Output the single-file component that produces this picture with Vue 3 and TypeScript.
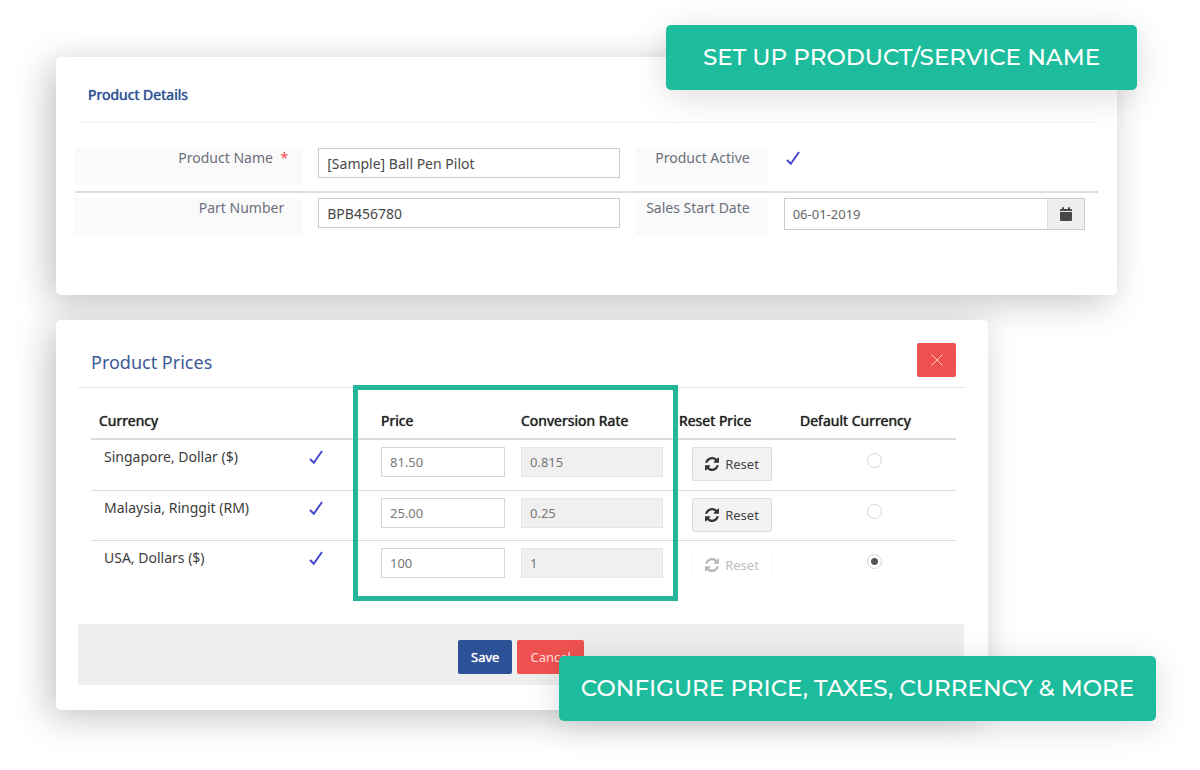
<script setup lang="ts">
import { ref } from 'vue'

interface PriceRow {
  id: string
  currency: string
  price: string
  rate: string
}

const productName = ref('[Sample] Ball Pen Pilot')
const partNumber = ref('BPB456780')
const salesStart = ref('06-01-2019')
const defaultCurrency = ref('usd')

const rows = ref<PriceRow[]>([
  { id: 'sgd', currency: 'Singapore, Dollar ($)', price: '81.50', rate: '0.815' },
  { id: 'myr', currency: 'Malaysia, Ringgit (RM)', price: '25.00', rate: '0.25' },
  { id: 'usd', currency: 'USA, Dollars ($)', price: '100', rate: '1' },
])
</script>

<template>
  <main class="page">
    <section class="card details">
      <h2 class="details-title">Product Details</h2>
      <div class="fields">
        <div class="field-row">
          <label class="field-label" for="product-name">Product Name <span class="required">*</span></label>
          <input id="product-name" v-model="productName" class="text-input" type="text" />
          <span class="field-label">Product Active</span>
          <span class="field-value">
            <svg class="check" viewBox="0 0 14 15" role="img" aria-label="Yes"><path d="M1 9 4.8 12.800 13 1" /></svg>
          </span>
        </div>
        <div class="field-row">
          <label class="field-label" for="part-number">Part Number</label>
          <input id="part-number" v-model="partNumber" class="text-input" type="text" />
          <label class="field-label" for="sales-start">Sales Start Date</label>
          <div class="date-group">
            <input id="sales-start" v-model="salesStart" class="date-input" type="text" />
            <button class="date-button" type="button" aria-label="Pick a date">
              <svg viewBox="0 0 12 14" width="12" height="14"><path d="M0 4V3Q0 2 1 2H2V1Q2 0 3 0T4 1V2H8V1Q8 0 9 0T10 1V2H11Q12 2 12 3V4ZM0 5H12V13Q12 14 11 14H1Q0 14 0 13Z" /></svg>
            </button>
          </div>
        </div>
      </div>
      <p class="callout callout-top">SET UP PRODUCT/SERVICE NAME</p>
    </section>

    <section class="card prices">
      <header class="prices-head">
        <h2 class="prices-title">Product Prices</h2>
        <button class="close" type="button" aria-label="Close">
          <svg viewBox="0 0 12 12" width="12" height="12"><path d="M.5.5 11.5 11.5M11.5.5.5 11.5" /></svg>
        </button>
      </header>

      <div class="table-wrap">
        <table>
          <colgroup>
            <col />
            <col class="col-check" />
            <col class="col-price" />
            <col class="col-rate" />
            <col class="col-reset" />
            <col class="col-default" />
          </colgroup>
          <thead>
            <tr>
              <th scope="col" colspan="2">Currency</th>
              <th scope="col">Price</th>
              <th scope="col">Conversion Rate</th>
              <th scope="col">Reset Price</th>
              <th scope="col">Default Currency</th>
            </tr>
          </thead>
          <tbody>
            <tr v-for="row in rows" :key="row.id">
              <td class="currency">{{ row.currency }}</td>
              <td>
                <svg class="check" viewBox="0 0 14 15" role="img" aria-label="Enabled"><path d="M1 9 4.8 12.800 13 1" /></svg>
              </td>
              <td><input v-model="row.price" class="cell-input" type="text" :aria-label="`Price, ${row.currency}`" /></td>
              <td><input v-model="row.rate" class="cell-input rate" type="text" disabled :aria-label="`Conversion rate, ${row.currency}`" /></td>
              <td class="reset-cell">
                <button class="reset" type="button" :disabled="row.id === defaultCurrency">
                  <svg viewBox="0 0 1536 1536" width="14" height="14"><path d="M1511 928q0 5-1 7-64 268-268 434.500T764 1536q-146 0-282.500-55T238 1324l-129 129q-19 19-45 19t-45-19-19-45V960q0-26 19-45t45-19h448q26 0 45 19t19 45-19 45l-137 137q71 66 161 102t187 36q134 0 250-65t186-179q11-17 53-117 8-23 30-23h192q13 0 22.500 9.500t9.500 22.500zm25-800v448q0 26-19 45t-45 19h-448q-26 0-45-19t-19-45 19-45l138-138Q969 256 768 256q-134 0-250 65T332 500q-11 17-53 117-8 23-30 23H50q-13 0-22.500-9.500T18 608v-7q65-268 270-434.500T768 0q146 0 284 55.500T1297 212l130-129q19-19 45-19t45 19 19 45z" /></svg>
                  Reset
                </button>
              </td>
              <td class="default-cell">
                <input v-model="defaultCurrency" type="radio" name="default-currency" :value="row.id" :aria-label="`Default: ${row.currency}`" />
              </td>
            </tr>
          </tbody>
        </table>
        <div class="highlight"></div>
      </div>

      <footer class="actions">
        <button class="action save" type="button">Save</button>
        <button class="action cancel" type="button">Cancel</button>
      </footer>
      <p class="callout callout-bottom">CONFIGURE PRICE, TAXES, CURRENCY &amp; MORE</p>
    </section>
  </main>
</template>

<style>
body {
  margin: 0;
  background: #fff;
}
</style>

<style scoped>
* {
  box-sizing: border-box;
}

.page {
  display: flex;
  flex-direction: column;
  gap: 25px;
  padding: 57px 83px 60px 56px;
  font-family: "Noto Sans", "Open Sans", sans-serif;
  font-size: 14px;
  line-height: 20px;
  color: #3c3c3c;
}

button,
input {
  font-family: inherit;
  font-size: 13px;
  line-height: 20px;
  margin: 0;
}

h2,
p {
  margin: 0;
}

.card {
  position: relative;
  background: #fff;
  border-radius: 5px;
  box-shadow: -7px 7px 36px rgba(0, 0, 0, 0.24);
}

.details {
  padding: 28px 19px 60px;
}

.details-title {
  margin: 0 0 0 3px;
  padding: 0 10px 17px;
  border-bottom: 1px solid #f0f0f0;
  font-size: 14px;
  font-weight: 400;
  color: #2c4f93;
  text-shadow: 0 0 1px #2c4f93;
}

.fields {
  padding-top: 25px;
}

.field-row {
  display: grid;
  grid-template-columns: 227fr 301fr 132fr 301fr;
  column-gap: 16px;
  align-items: start;
  padding-right: 13px;
}

.field-row + .field-row {
  margin-top: 6px;
  padding-top: 5px;
  border-top: 2px solid #ddd;
}

.field-label {
  height: 37px;
  padding-right: 18px;
  background: #fafafa;
  color: #6a6f7b;
  text-align: right;
}

.required {
  margin-left: 4px;
  margin-right: -4px;
  color: #ee4b4b;
}

.text-input {
  width: 100%;
  height: 30px;
  padding: 0 8px;
  border: 1px solid #ccc;
  background: #fff;
  font-size: 14px;
  color: #484848;
}

.field-value {
  padding: 3px 2px;
  line-height: 0;
}

.check {
  width: 14px;
  height: 15px;
  fill: none;
  stroke: #4448cf;
  stroke-width: 2;
}

.date-group {
  display: flex;
  height: 32px;
  border: 1px solid #ccc;
}

.date-input {
  flex: 1;
  min-width: 0;
  padding: 0 8px;
  border: 0;
  background: #fff;
  color: #666;
}

.date-button {
  display: flex;
  align-items: center;
  justify-content: center;
  width: 37px;
  padding: 0;
  border: 0;
  border-left: 1px solid #ddd;
  background: #eee;
  fill: #484848;
}

.callout {
  position: absolute;
  height: 65px;
  border-radius: 5px;
  background: #1dbc9c;
  box-shadow: 0 6px 34px rgba(0, 0, 0, 0.14);
  color: #fff;
  font-family: Montserrat, Inter, sans-serif;
  font-size: 23px;
  font-weight: 500;
  line-height: 65px;
  text-align: center;
  white-space: nowrap;
}

.callout-top {
  top: -32px;
  right: -20px;
  width: 471px;
}

.callout-bottom {
  right: -168px;
  bottom: -11px;
  width: 597px;
}

.prices {
  margin-right: 129px;
  padding: 23px 24px 25px 22px;
}

.prices-head {
  display: flex;
  justify-content: space-between;
  align-items: flex-start;
  padding: 0 8px 6px 13px;
  border-bottom: 1px solid #e5e5e5;
}

.prices-title {
  font-size: 18px;
  font-weight: 400;
  line-height: 38px;
  color: #3c5a97;
}

.close {
  display: flex;
  align-items: center;
  justify-content: center;
  width: 39px;
  height: 34px;
  padding: 0;
  border: 0;
  border-radius: 2px;
  background: #ef5150;
  stroke: #fbc4c4;
}

.table-wrap {
  position: relative;
  margin: 0 8px 34px 13px;
}

table {
  width: 100%;
  table-layout: fixed;
  border-collapse: separate;
  border-spacing: 0;
}

.col-check {
  width: 72px;
}

.col-price {
  width: 140px;
}

.col-rate {
  width: 158px;
}

.col-reset {
  width: 121px;
}

.col-default {
  width: 164px;
}

th {
  padding: 23px 8px 7px;
  border-bottom: 2px solid #ddd;
  font-weight: 400;
  color: #222;
  text-align: left;
  text-shadow: 0 0 1px #222;
  white-space: nowrap;
}

td {
  height: 50px;
  padding: 7px 8px 0;
  vertical-align: top;
}

tr + tr td {
  border-top: 1px solid #ddd;
}

td.currency {
  padding-left: 13px;
  white-space: nowrap;
}

td .check {
  display: block;
  margin-top: 3px;
}

.cell-input {
  display: block;
  width: 100%;
  height: 30px;
  padding: 0 8px;
  border: 1px solid #d5d5d5;
  background: #fff;
  color: #777;
}

.rate {
  border-color: #e5e5e5;
  background: #f0f0f0;
}

td.reset-cell {
  padding-left: 21px;
}

.reset {
  display: flex;
  align-items: center;
  justify-content: center;
  gap: 6px;
  width: 80px;
  height: 34px;
  padding: 0;
  border: 1px solid #ddd;
  border-radius: 2px;
  background: #f3f3f3;
  color: #444;
  fill: #333;
}

.reset:disabled {
  border-color: #eee;
  background: #fff;
  opacity: 0.35;
}

td.default-cell {
  padding: 13px 0 0 75px;
}

input[type='radio'] {
  display: block;
  width: 15px;
  height: 15px;
  appearance: none;
  border: 1px solid #d5d5d5;
  border-radius: 50%;
  background: #fff;
}

input[type='radio']:checked {
  background: radial-gradient(circle, #555 3px, #fff 4px);
}

.highlight {
  position: absolute;
  top: -3px;
  right: 278px;
  width: 325px;
  height: 216px;
  border: 5px solid #25b699;
  pointer-events: none;
}

.actions {
  display: flex;
  justify-content: center;
  gap: 5px;
  padding: 16px 0 11px;
  background: #eee;
}

.action {
  height: 34px;
  padding: 0 13px;
  border: 0;
  border-radius: 2px;
  color: #fff;
}

.save {
  background: #2c5196;
  text-shadow: 0 0 1px #fff;
}

.cancel {
  background: #ef5150;
  color: #fdd;
}
</style>
